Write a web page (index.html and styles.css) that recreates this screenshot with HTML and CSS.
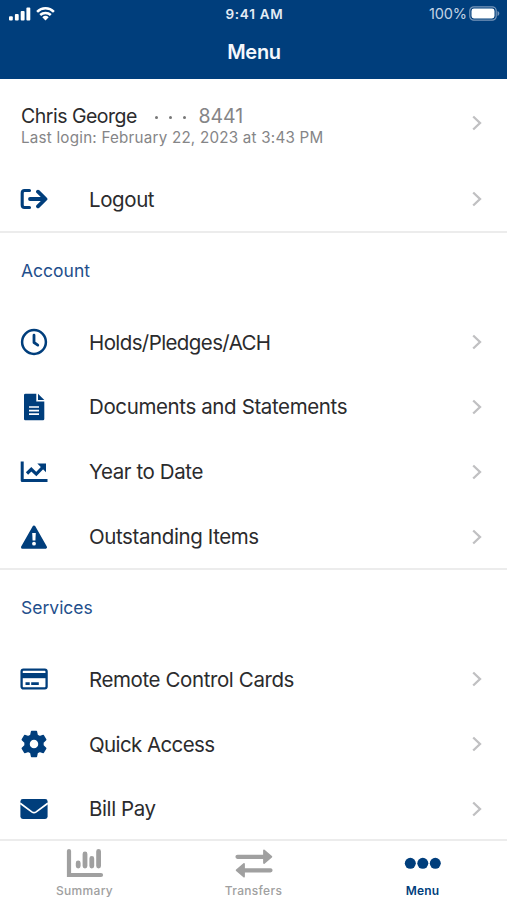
FILE: index.html
```html
<!DOCTYPE html>
<html lang="en">
<head>
<meta charset="utf-8">
<title>Menu</title>
<link rel="stylesheet" href="styles.css">
</head>
<body>
<svg class="defs" width="0" height="0"><symbol id="chevron" viewBox="0 0 10 16"><path d="M1.200 1.500 8 8l-6.800 6.500" fill="none" stroke="currentColor" stroke-width="2.300"/></symbol></svg>
<div class="app">
  <header class="header">
    <div class="status">
      <div class="signals">
        <svg width="22" height="14" viewBox="0 0 22 14" fill="currentColor"><rect x="0" y="9.300" width="3.800" height="4.200" rx="1"/><rect x="5.900" y="7" width="3.800" height="6.500" rx="1"/><rect x="11.700" y="4" width="3.900" height="9.500" rx="1"/><rect x="17.400" y="0.500" width="3.900" height="13" rx="1"/></svg>
        <svg width="19" height="14" viewBox="0 0 19 14" fill="none" stroke="currentColor" stroke-width="2.500"><path d="M1.100 4.800a12 12 0 0 1 16.800 0M4.200 8a7.700 7.700 0 0 1 10.600 0"/><path d="M6.300 10.200a4.700 4.700 0 0 1 6.400 0L9.500 13.400z" fill="currentColor" stroke="none"/></svg>
      </div>
      <div class="time">9:41 AM</div>
      <div class="power"><span class="percent">100%</span><svg width="31" height="15" viewBox="0 0 31 15"><rect x=".8" y=".8" width="26.400" height="13.400" rx="4" fill="none" stroke="#7897ba" stroke-width="1.200"/><rect x="2.500" y="2.500" width="23" height="10" rx="2.400" fill="#fff"/><path d="M28.500 5v5c2.400-.8 2.400-4.200 0-5z" fill="#7897ba"/></svg></div>
    </div>
    <h1 class="title">Menu</h1>
  </header>
  <main class="content">
    <section class="group">
      <div class="user">
        <div class="profile">
          <div class="user-line"><span class="name">Chris George</span><span class="dots"><i></i><i></i><i></i></span><span class="number">8441</span></div>
          <div class="last">Last login: February 22, 2023 at 3:43 PM</div>
        </div>
        <svg class="chev"><use href="#chevron"/></svg>
      </div>
      <div class="row"><svg class="icon" viewBox="0 0 28 28"><g fill="none" stroke="currentColor" stroke-linecap="round" stroke-linejoin="round"><path d="M9.500 5.500H4.500Q2.200 5.500 2.200 8v12q0 2.500 2.300 2.500h5" stroke-width="3.100"/><path d="M10 14h15M18 6.700l7.500 7.300-7.500 7.300" stroke-width="3.800"/></g></svg><span class="label">Logout</span><svg class="chev"><use href="#chevron"/></svg></div>
    </section>
    <section class="group">
      <h2 class="heading">Account</h2>
      <div class="row"><svg class="icon" viewBox="0 0 28 28"><g fill="none" stroke="currentColor"><circle cx="14" cy="14" r="11.900" stroke-width="2.500"/><path d="M14 7.200v7.300l3.800 2.600" stroke-width="2.800" stroke-linecap="round" stroke-linejoin="round"/></g></svg><span class="label tight">Holds/Pledges/ACH</span><svg class="chev"><use href="#chevron"/></svg></div>
      <div class="row"><svg class="icon" viewBox="0 0 28 28"><path d="M5.500.7h10.800V8.500h8V26q0 1.300-1.300 1.300H5.300Q4 27.300 4 26V2Q4 .7 5.500.7z" fill="currentColor"/><path d="M18 .7l6.300 6.200H18z" fill="currentColor"/><path d="M9 14h10M9 17.600h10M9 21.200h10" stroke="#fff" stroke-width="1.700"/></svg><span class="label loose">Documents and Statements</span><svg class="chev"><use href="#chevron"/></svg></div>
      <div class="row"><svg class="icon" viewBox="0 0 28 28"><path d="M2.200 5v17.500H26" fill="none" stroke="currentColor" stroke-width="3" stroke-linecap="square" stroke-linejoin="round"/><path d="M7 15.500l4.300-4.200 5 4.800 6.200-6.500" fill="none" stroke="currentColor" stroke-width="3.200"/><path d="M17.300 5.600H26v8.600z" fill="currentColor"/></svg><span class="label">Year to Date</span><svg class="chev"><use href="#chevron"/></svg></div>
      <div class="row"><svg class="icon" viewBox="0 0 28 28"><path d="M14 4 25.500 24.200H2.500z" fill="currentColor" stroke="currentColor" stroke-width="3" stroke-linejoin="round"/><path d="M12.200 10h3.600l-.4 7.500h-2.800z" fill="#fff"/><circle cx="14" cy="20.700" r="1.900" fill="#fff"/></svg><span class="label">Outstanding Items</span><svg class="chev"><use href="#chevron"/></svg></div>
    </section>
    <section class="group">
      <h2 class="heading">Services</h2>
      <div class="row"><svg class="icon" viewBox="0 0 28 28"><rect x="1.600" y="4.600" width="25" height="18.800" rx="1.800" fill="none" stroke="currentColor" stroke-width="2.300"/><path d="M1 8h26v5.200H1z" fill="currentColor"/><path d="M3.300 7h21.500" stroke="#fff" stroke-width="1.300"/><path d="M5.500 18.600h4.200M11.200 18.600h7.600" stroke="currentColor" stroke-width="2.600"/></svg><span class="label">Remote Control Cards</span><svg class="chev"><use href="#chevron"/></svg></div>
      <div class="row"><svg class="icon" viewBox="0 0 28 28"><path fill="currentColor" fill-rule="evenodd" stroke="currentColor" stroke-width="1.500" stroke-linejoin="round" d="M11.600 1.600h4.800l.8 3.700 2.500 1.400 3.600-1.200 2.400 4.200-2.800 2.700v3.200l2.800 2.700-2.400 4.200-3.600-1.200-2.500 1.400-.8 3.700h-4.800l-.8-3.700-2.500-1.400-3.600 1.200-2.400-4.200 2.800-2.700v-3.200L2.300 9.700l2.400-4.200 3.600 1.200 2.500-1.400zM14 9a5 5 0 1 0 0 10 5 5 0 1 0 0-10z"/></svg><span class="label tight">Quick Access</span><svg class="chev"><use href="#chevron"/></svg></div>
      <div class="row"><svg class="icon" viewBox="0 0 28 28"><rect x=".4" y="4" width="27.200" height="20" rx="2.400" fill="currentColor"/><path d="M.2 8.300l11.600 8.600q2.200 1.500 4.400 0l11.600-8.600" fill="none" stroke="#fff" stroke-width="1.700"/></svg><span class="label">Bill Pay</span><svg class="chev"><use href="#chevron"/></svg></div>
    </section>
  </main>
  <nav class="tabs">
    <div class="tab"><svg width="38" height="30" viewBox="0 0 38 30"><g fill="none" stroke="currentColor" stroke-linecap="round"><path d="M3 3v24h32" stroke-width="4.200"/><path d="M12.200 15v3M19 6v12M25.800 10.500V18M32.600 3.500V18" stroke-width="4.800"/></g></svg><span>Summary</span></div>
    <div class="tab"><svg width="38" height="30" viewBox="0 0 38 30"><path d="M2.500 8.800h26M9.500 22.300h26" stroke="currentColor" stroke-width="4.200" stroke-linecap="round"/><path d="M29 2.500l7.300 6.300L29 15zM9 16l-7.300 6.300L9 28.600z" fill="currentColor" stroke="currentColor" stroke-width="1.800" stroke-linejoin="round"/></svg><span>Transfers</span></div>
    <div class="tab active"><svg width="38" height="30" viewBox="0 0 38 30" fill="currentColor"><circle cx="6.300" cy="15.300" r="5.500"/><circle cx="18.800" cy="15.300" r="5.500"/><circle cx="31.300" cy="15.300" r="5.500"/></svg><span>Menu</span></div>
  </nav>
</div>
</body>
</html>
```
FILE: styles.css
```css
* { box-sizing: border-box; }
body { margin: 0; background: #fff; font-family: Inter, "Liberation Sans", sans-serif; color: #2b2b2d; }
svg { display: block; flex: none; }
.defs { position: absolute; }
.app { display: flex; flex-direction: column; width: 507px; height: 900px; overflow: hidden; }

.header { height: 79px; flex: none; background: #003e7c; color: #fff; }
.status { display: grid; grid-template-columns: 1fr auto 1fr; align-items: center; height: 27px; padding: 0 7px 0 9px; }
.signals { display: flex; gap: 5px; }
.time { font-size: 13.500px; font-weight: 600; letter-spacing: .75px; color: #e4ecf4; }
.power { display: flex; align-items: center; justify-content: flex-end; gap: 3px; }
.percent { font-size: 14.500px; letter-spacing: -.1px; margin-right: -1px; color: #c3d3e4; }
.title { margin: 12px 0 0; padding-left: 1px; font-size: 20px; line-height: 27px; font-weight: 600; letter-spacing: -.3px; text-align: center; color: #f4f8fc; }

.content { flex: 1; min-height: 0; overflow: hidden; }
.group { border-bottom: 2px solid #ececec; }
.user, .row { display: flex; align-items: center; padding: 0 24px 0 20px; }
.user { height: 87px; justify-content: space-between; }
.profile { padding-top: 6px; }
.user-line { display: flex; align-items: center; padding-left: 1px; line-height: 24px; font-size: 19.500px; }
.name { letter-spacing: -.5px; }
.dots { display: flex; gap: 10.500px; margin: 3px 12px 0 18px; }
.dots i { width: 3.500px; height: 3.500px; border-radius: 50%; background: #777; }
.number { color: #858587; }
.last { padding-left: 1px; font-size: 15.200px; line-height: 19px; letter-spacing: .22px; color: #858587; }
.row { height: 64.800px; padding-top: 2px; }
.icon { width: 28px; height: 28px; color: #003e7c; }
.label { flex: 1; margin-left: 41px; padding-top: 1px; font-size: 20.500px; line-height: 26px; letter-spacing: -.4px; }
.label.tight { letter-spacing: -.6px; }
.label.loose { letter-spacing: -.38px; }
.chev { width: 10px; height: 16px; color: #c0c0c2; margin-right: 1px; }
.heading { height: 76px; margin: 0; padding-left: 21px; font-size: 17.500px; line-height: 75px; font-weight: 400; color: #1f4f8c; }

.tabs { display: grid; grid-template-columns: repeat(3, 1fr); height: 61px; flex: none; border-top: 2px solid #ececec; background: #fff; }
.tab { display: flex; flex-direction: column; align-items: center; padding-top: 7px; font-size: 12px; line-height: 18px; font-weight: 500; color: #a0a0a0; letter-spacing: .3px; }
.tab span { margin-top: 4px; }
.active { color: #003e7c; font-weight: 600; letter-spacing: .1px; }
```
